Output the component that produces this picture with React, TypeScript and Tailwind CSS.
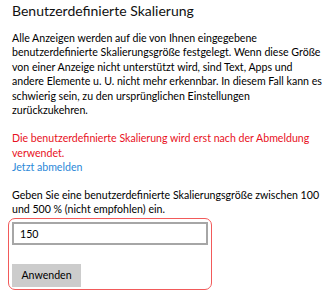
export default function App() {
  return (
    <div
      className="relative w-[328px] h-[302px] bg-white text-black pl-[12px] pt-[1px] overflow-hidden"
      style={{ fontFamily: '"Segoe UI", Lato, sans-serif' }}
    >
      {/* Header */}
      <h1 className="text-[14px] leading-[20px] font-normal text-[#111]">Benutzerdefinierte Skalierung</h1>

      {/* Description */}
      <p className="mt-[10px] text-[10.6px] leading-[14.4px] whitespace-nowrap">
        Alle Anzeigen werden auf die von Ihnen eingegebene
        <br />
        benutzerdefinierte Skalierungsgröße festgelegt. Wenn diese Größe
        <br />
        von einer Anzeige nicht unterstützt wird, sind Text, Apps und
        <br />
        andere Elemente u. U. nicht mehr erkennbar. In diesem Fall kann es
        <br />
        schwierig sein, zu den ursprünglichen Einstellungen
        <br />
        zurückzukehren.
      </p>

      {/* Sign-out notice */}
      <div className="mt-[14px] text-[10.6px] leading-[14.4px] whitespace-nowrap">
        <p className="text-[#e81123]">
          Die benutzerdefinierte Skalierung wird erst nach der Abmeldung
          <br />
          verwendet.
        </p>
        <a href="#" className="text-[#2b88d8]">Jetzt abmelden</a>
      </div>

      {/* Custom value */}
      <p className="mt-[13px] text-[10.6px] leading-[14.4px] whitespace-nowrap">
        Geben Sie eine benutzerdefinierte Skalierungsgröße zwischen 100
        <br />
        und 500 % (nicht empfohlen) ein.
      </p>

      <input
        type="text"
        defaultValue="150"
        className="mt-[6px] block w-[196px] h-[23px] border-2 border-[#a6a6a6] bg-white px-[6px] text-[10.6px] outline-none"
      />

      <button className="mt-[19px] block w-[69px] h-[23px] bg-[#cccccc] text-[10.6px] text-black">
        Anwenden
      </button>

      {/* Highlight annotation */}
      <div className="absolute left-[8px] top-[218px] w-[204px] h-[72px] rounded-[7px] border-[1.5px] border-[#f25a5a] pointer-events-none" />
    </div>
  );
}
